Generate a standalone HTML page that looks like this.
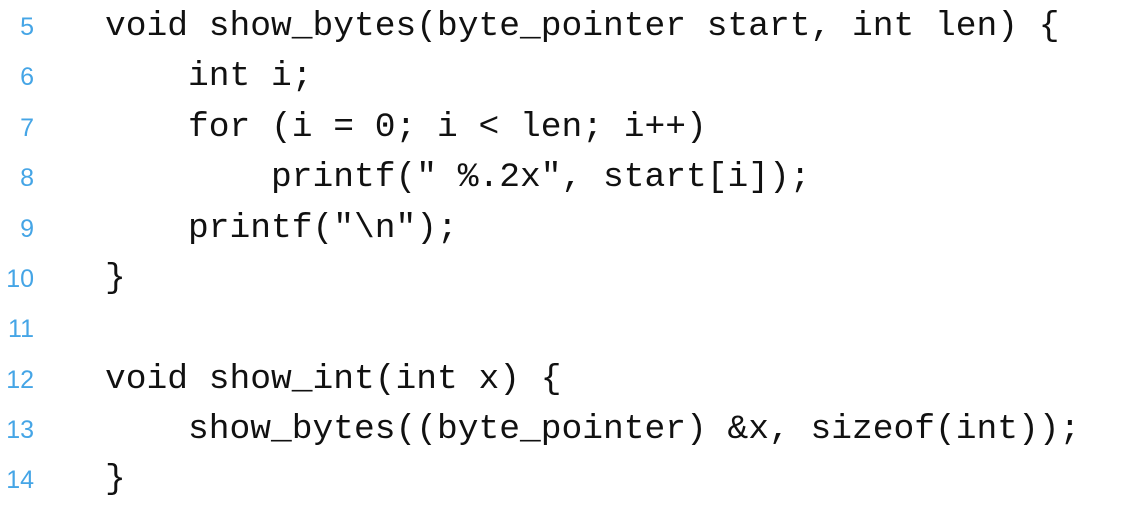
<!DOCTYPE html>
<html><head><style>
html,body{margin:0;padding:0;background:#fff;width:1142px;height:512px;overflow:hidden}
.l{position:absolute;left:0;height:50px;line-height:50px;white-space:pre}
.n{position:absolute;left:0;width:34px;text-align:right;font-family:"Liberation Sans",sans-serif;font-size:25px;color:#45a5e6}
.c{position:absolute;left:105px;font-family:"Liberation Mono",monospace;font-size:34.6px;color:#111}
</style></head><body>
<div class="l" style="top:2px"><span class="n">5</span><span class="c">void show_bytes(byte_pointer start, int len) {</span></div>
<div class="l" style="top:52px"><span class="n">6</span><span class="c">    int i;</span></div>
<div class="l" style="top:103px"><span class="n">7</span><span class="c">    for (i = 0; i &lt; len; i++)</span></div>
<div class="l" style="top:153px"><span class="n">8</span><span class="c">        printf(" %.2x", start[i]);</span></div>
<div class="l" style="top:204px"><span class="n">9</span><span class="c">    printf("\n");</span></div>
<div class="l" style="top:254px"><span class="n">10</span><span class="c">}</span></div>
<div class="l" style="top:304px"><span class="n">11</span></div>
<div class="l" style="top:355px"><span class="n">12</span><span class="c">void show_int(int x) {</span></div>
<div class="l" style="top:405px"><span class="n">13</span><span class="c">    show_bytes((byte_pointer) &amp;x, sizeof(int));</span></div>
<div class="l" style="top:455px"><span class="n">14</span><span class="c">}</span></div>
</body></html>
